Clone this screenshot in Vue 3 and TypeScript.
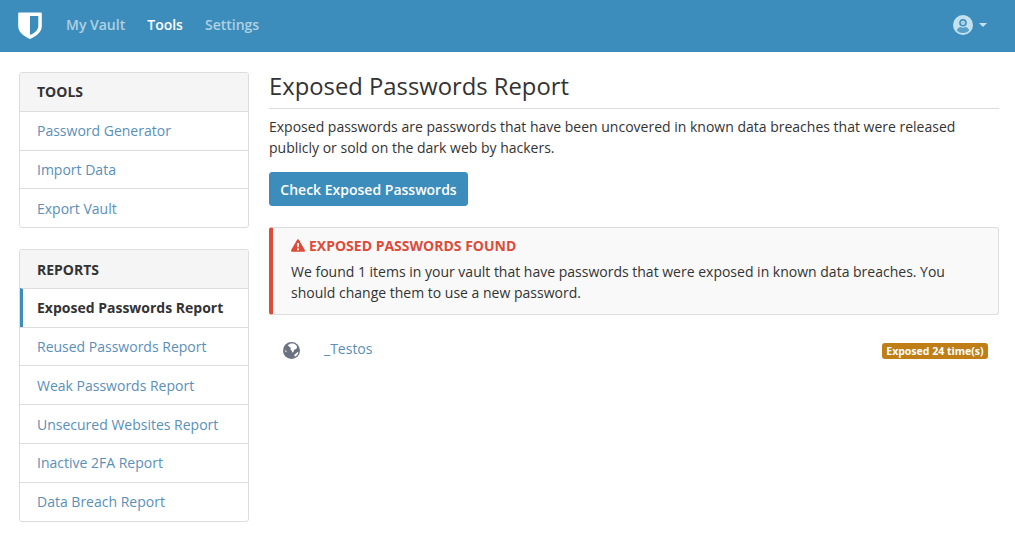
<script setup lang="ts">
const navItems = [
  { label: 'My Vault', active: false },
  { label: 'Tools', active: true },
  { label: 'Settings', active: false },
]
const tools = ['Password Generator', 'Import Data', 'Export Vault']
const reports = [
  'Exposed Passwords Report',
  'Reused Passwords Report',
  'Weak Passwords Report',
  'Unsecured Websites Report',
  'Inactive 2FA Report',
  'Data Breach Report',
]
</script>

<template>
  <div class="page">
    <nav class="navbar">
      <svg class="logo" width="24" height="27" viewBox="0 0 24 27">
        <path fill="#fff" d="M1.2 0.6H22.8a1 1 0 0 1 1 1V14c0 6.5-6.2 10.5-11.8 12.9C6.400 24.500 0.200 20.500 0.200 14V1.600a1 1 0 0 1 1-1z" />
        <path fill="#3c8dbc" d="M12 4H20.300V14c0 4.300-4.100 7.200-8.300 9.100z" />
      </svg>
      <a v-for="n in navItems" :key="n.label" class="nav-link" :class="{ active: n.active }">{{ n.label }}</a>
      <div class="account">
        <svg width="20" height="20" viewBox="0 0 20 20">
          <circle cx="10" cy="10" r="10" fill="#c4e1f0" />
          <circle cx="10" cy="7.800" r="3.100" fill="#a9d0e6" stroke="#3c8dbc" stroke-width="1.400" />
          <path fill="#5a9fc8" d="M3.800 15.400c.8-2.300 2.700-3.300 3.900-3.300 1.500.7 3.100.7 4.600 0 1.200 0 3.100 1 3.900 3.300A8 8 0 0 1 10 18a8 8 0 0 1-6.200-2.600z" />
        </svg>
        <span class="caret"></span>
      </div>
    </nav>

    <div class="content">
      <aside class="sidebar">
        <section class="card">
          <h2 class="card-header">TOOLS</h2>
          <a v-for="t in tools" :key="t" class="item">{{ t }}</a>
        </section>
        <section class="card">
          <h2 class="card-header">REPORTS</h2>
          <a v-for="(r, i) in reports" :key="r" class="item" :class="{ current: i === 0 }">{{ r }}</a>
        </section>
      </aside>

      <main class="main">
        <h1 class="title">Exposed Passwords Report</h1>
        <p class="intro">Exposed passwords are passwords that have been uncovered in known data breaches that were released publicly or sold on the dark web by hackers.</p>
        <button class="btn" type="button">Check Exposed Passwords</button>

        <div class="callout">
          <div class="callout-title">
            <svg width="14" height="13" viewBox="0 0 14 13">
              <path fill="#dd4b39" fill-rule="evenodd" d="M7 .3c.4 0 .7.2.9.5l5.900 10.300c.4.7-.1 1.600-.9 1.600H1.100c-.8 0-1.300-.9-.9-1.600L6.100.8C6.300.5 6.600.3 7 .3zM6 4l.2 4.300h1.600L8 4zm1 5.200a1.100 1.100 0 1 0 0 2.200 1.100 1.100 0 0 0 0-2.200z" />
            </svg>
            <span>EXPOSED PASSWORDS FOUND</span>
          </div>
          <p>We found 1 items in your vault that have passwords that were exposed in known data breaches. You should change them to use a new password.</p>
        </div>

        <div class="row">
          <svg class="globe" width="17" height="17" viewBox="0 0 16 16">
            <circle cx="8" cy="8" r="8" fill="#6b7280" />
            <path fill="#fff" d="M6.200 1.800c1.500-.5 3.300-.5 4.800.1l1.800 1.400.4 2.100-1.100 1.500-1.500.1-.4 1.700-1.400 1.500-.5-1.700-1.300-1.700.3-1.400L5.400 4l-.9-.9z" />
            <path fill="#fff" d="M13.600 9.500l.9.300c-.5 1.700-1.500 3-2.900 3.800l-1.100-.4.5-1.700 1.300-.6z" />
            <path fill="#fff" d="M1.500 7.200l1.300.5 1 1.500-1.100.6-1-1z" opacity=".55" />
          </svg>
          <a class="cipher">_Testos</a>
          <span class="badge">Exposed 24 time(s)</span>
        </div>
      </main>
    </div>
  </div>
</template>

<style>
html, body { margin: 0; background: #fff; }
</style>

<style scoped>
.page {
  font-family: "Open Sans", "Liberation Sans", sans-serif;
  font-size: 14px;
  line-height: 21px;
  color: #333;
  min-height: 540px;
}
.navbar {
  height: 52px;
  background: #3c8dbc;
  display: flex;
  align-items: center;
  padding: 0 28px 0 18px;
  box-sizing: border-box;
}
.logo { margin-right: 13px; margin-top: -1px; flex: none; }
.nav-link {
  color: rgba(255, 255, 255, 0.6);
  font-weight: 600;
  padding: 0 11px;
  margin-top: -3px;
}
.nav-link.active { color: #fff; }
.account { margin-left: auto; display: flex; align-items: center; gap: 6px; margin-top: -3px; }
.account svg { display: block; }
.caret {
  border-top: 4px solid #c4e1f0;
  border-left: 4px solid transparent;
  border-right: 4px solid transparent;
}
.content {
  display: flex;
  gap: 20px;
  padding: 20px 16px 0 19px;
}
.sidebar { width: 230px; flex: none; display: flex; flex-direction: column; gap: 21px; }
.card {
  border: 1px solid #ddd;
  border-radius: 3px;
  background: #fff;
  display: flex;
  flex-direction: column;
}
.card-header {
  margin: 0;
  font-size: 14px;
  font-weight: 700;
  line-height: 21px;
  background: #f5f5f5;
  padding: 8.4px 17px;
  color: #333;
  border-radius: 3px 3px 0 0;
}
.item {
  border-top: 1px solid #ddd;
  padding: 8.4px 17px;
  color: #5a8fb8;
}
.item.current {
  color: #333;
  font-weight: 700;
  border-left: 3px solid #3c8dbc;
  padding-left: 14px;
}
.main { flex: 1; min-width: 0; }
.title {
  margin: 0 0 7px;
  font-size: 23.8px;
  font-weight: 400;
  line-height: 28px;
  padding: 0 0 8px;
  border-bottom: 1px solid #ddd;
  color: #333;
}
.intro { margin: 0 0 14px; }
.btn {
  display: block;
  height: 34px;
  width: 199px;
  background: #3c8dbc;
  color: #fff;
  border: 1px solid #3c8dbc;
  border-radius: 3px;
  font: 600 14px "Open Sans", "Liberation Sans", sans-serif;
  padding: 0;
}
.callout {
  margin-top: 21px;
  background: #f9f9f9;
  border: 1px solid #ddd;
  border-left: 4px solid #dd4b39;
  border-radius: 3px;
  padding: 7px 18px 11px 18px;
}
.callout-title {
  display: flex;
  align-items: center;
  gap: 4px;
  color: #dd4b39;
  font-weight: 700;
  margin-bottom: 5px;
}
.callout p { margin: 0; }
.row {
  display: flex;
  align-items: center;
  margin-top: 23px;
  padding: 0 11px 0 14px;
  height: 21px;
}
.globe { flex: none; margin-top: 3px; }
.cipher { color: #5a8fb8; margin-left: 24px; }
.badge {
  margin-left: auto;
  background: #bf7e16;
  color: #fff;
  font-size: 10.5px;
  font-weight: 700;
  line-height: 16px;
  padding: 0 4.5px;
  border-radius: 3px;
  margin-top: 5px;
}
</style>
